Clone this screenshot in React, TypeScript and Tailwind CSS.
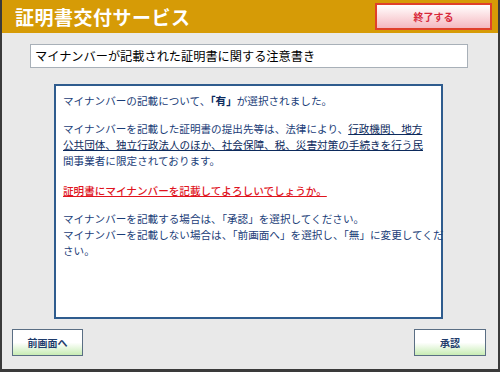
export default function App() {
  const font = { fontFamily: '"Noto Sans CJK JP", "Noto Sans", sans-serif' };
  return (
    <div
      className="w-[500px] h-[372px] bg-[#e9e9e9] border-l-2 border-r-2 border-b-[3px] border-[#3a3a3a] flex flex-col overflow-hidden"
      style={font}
    >
      <header className="h-[33px] bg-[#d69b06] flex items-center justify-between pl-[13px] pr-[6px] shrink-0">
        <h1 className="text-white font-bold text-[19px] leading-none tracking-[0.5px]">
          証明書交付サービス
        </h1>
        <button className="w-[117px] h-[27px] border-2 border-[#e0402a] bg-gradient-to-b from-white to-[#f4b8c0] text-[#d8283a] font-bold text-[10px] flex items-center justify-center">
          終了する
        </button>
      </header>

      <div className="mt-[11px] ml-[28px] w-[438px] h-[24px] bg-white border border-[#a8b0b8] flex items-center pl-[4px] text-[12.2px] text-black">
        マイナンバーが記載された証明書に関する注意書き
      </div>

      <div className="mt-[16px] ml-[52px] w-[389px] h-[235px] bg-white border-2 border-[#2f5c8e] px-[7px] pt-[7px] text-[10.6px] leading-[16px] text-[#1a3d78] whitespace-nowrap">
        <p>
          マイナンバーの記載について、<span className="font-bold text-[#0c2a5c]">「有」</span>が選択されました。
        </p>
        <p className="mt-[12px]">
          マイナンバーを記載した証明書の提出先等は、法律により、
          <span className="underline text-[#0c2a5c]">行政機関、地方</span>
          <br />
          <span className="underline text-[#0c2a5c]">公共団体、独立行政法人のほか、社会保障、税、災害対策の手続きを行う民</span>
          <br />
          間事業者に限定されております。
        </p>
        <p className="mt-[14px] text-[#e0141e] underline font-medium">
          証明書にマイナンバーを記載してよろしいでしょうか。
        </p>
        <p className="mt-[12px]">
          マイナンバーを記載する場合は、「承認」を選択してください。
          <br />
          マイナンバーを記載しない場合は、「前画面へ」を選択し、「無」に変更してくだ
          <br />
          さい。
        </p>
      </div>

      <div className="mt-[10px] flex justify-between pl-[10px] pr-[12px]">
        <button className="w-[71px] h-[27px] border border-[#5a6e84] bg-gradient-to-b from-white from-50% to-[#c8ecb4] text-[#1e3c6c] font-bold text-[10px] flex items-center justify-center">
          前画面へ
        </button>
        <button className="w-[72px] h-[27px] border border-[#5a6e84] bg-gradient-to-b from-white from-50% to-[#c8ecb4] text-[#1e3c6c] font-bold text-[10px] flex items-center justify-center">
          承認
        </button>
      </div>
    </div>
  );
}
